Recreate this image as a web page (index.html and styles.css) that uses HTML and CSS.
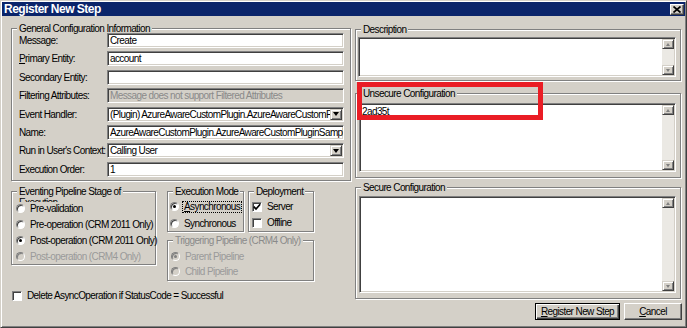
FILE: index.html
```html
<!DOCTYPE html>
<html lang="en">
<head>
    <meta charset="UTF-8">
    <title>Register New Step</title>
    <link rel="stylesheet" href="styles.css">
</head>
<body>
    <div class="window">
        <div class="titlebar">
            <span class="title">Register New Step</span>
            <span class="close-btn">
                <svg width="8" height="7" viewBox="0 0 8 7"><path d="M0.5 0.5 L7.5 6.5 M7.5 0.5 L0.5 6.5" stroke="#000" stroke-width="1.7"/></svg>
            </span>
        </div>

        <div class="content">
            <div class="col-left">
                <div class="group general">
                    <span class="gtitle">General Configuration Information</span>
                    <div class="form-grid">
                        <label>Message:</label>
                        <div class="field">Create</div>

                        <label><u>P</u>rimary Entity:</label>
                        <div class="field">account</div>

                        <label>Secondary Entity:</label>
                        <div class="field"></div>

                        <label>Filtering Attributes:</label>
                        <div class="field disabled">Message does not support Filtered Attributes</div>

                        <label>Event Handler:</label>
                        <div class="field combo">
                            <span class="combo-text">(Plugin) AzureAwareCustomPlugin.AzureAwareCustomPlugin</span>
                            <span class="dd-btn"><span class="arrow-down"></span></span>
                        </div>

                        <label>Name:</label>
                        <div class="field">AzureAwareCustomPlugin.AzureAwareCustomPluginSample01: Create of account</div>

                        <label>Run in User's Context:</label>
                        <div class="field combo">
                            <span class="combo-text">Calling User</span>
                            <span class="dd-btn"><span class="arrow-down"></span></span>
                        </div>

                        <label>Execution Order:</label>
                        <div class="field">1</div>
                    </div>
                </div>

                <div class="lower">
                    <div class="group stage">
                        <span class="gtitle">Eventing Pipeline Stage of<br>Execution</span>
                        <div class="items">
                            <div class="opt"><span class="radio"></span>Pre-validation</div>
                            <div class="opt"><span class="radio"></span>Pre-operation (CRM 2011 Only)</div>
                            <div class="opt"><span class="radio on"></span>Post-operation (CRM 2011 Only)</div>
                            <div class="opt off"><span class="radio"></span>Post-operation (CRM4 Only)</div>
                        </div>
                    </div>

                    <div class="lower-right">
                        <div class="lower-top">
                            <div class="group mode">
                                <span class="gtitle">Execution Mode</span>
                                <div class="items">
                                    <div class="opt"><span class="radio on"></span><span class="focus"><u>A</u>synchronous</span></div>
                                    <div class="opt"><span class="radio"></span>Synchronous</div>
                                </div>
                            </div>
                            <div class="group deploy">
                                <span class="gtitle">Deployment</span>
                                <div class="items">
                                    <div class="opt">
                                        <span class="check"><svg width="8" height="8" viewBox="0 0 8 8"><path d="M0.8 3.6 L3 6 L7.2 1.2" fill="none" stroke="#000" stroke-width="1.7"/></svg></span>Server
                                    </div>
                                    <div class="opt"><span class="check"></span>Offline</div>
                                </div>
                            </div>
                        </div>
                        <div class="group trigger">
                            <span class="gtitle">Triggering Pipeline (CRM4 Only)</span>
                            <div class="items">
                                <div class="opt off"><span class="radio on"></span>Parent Pipeline</div>
                                <div class="opt off"><span class="radio"></span>Child Pipeline</div>
                            </div>
                        </div>
                    </div>
                </div>

                <div class="opt delete-opt"><span class="check"></span>Delete AsyncOperation if StatusCode = Successful</div>
            </div>

            <div class="col-right">
                <div class="group desc">
                    <span class="gtitle">Description</span>
                    <div class="textbox">
                        <div class="text"></div>
                        <div class="vscroll"><span class="sb-btn"><span class="arrow-up"></span></span><span class="sb-btn"><span class="arrow-dn"></span></span></div>
                    </div>
                </div>

                <div class="group unsecure">
                    <span class="gtitle">Unsecure Configuration</span>
                    <div class="textbox">
                        <div class="text">2ad35t</div>
                        <div class="vscroll"><span class="sb-btn"><span class="arrow-up"></span></span><span class="sb-btn"><span class="arrow-dn"></span></span></div>
                    </div>
                </div>

                <div class="group secure">
                    <span class="gtitle">Secure Configuration</span>
                    <div class="textbox">
                        <div class="text"></div>
                        <div class="vscroll"><span class="sb-btn"><span class="arrow-up"></span></span><span class="sb-btn"><span class="arrow-dn"></span></span></div>
                    </div>
                </div>

                <div class="buttons">
                    <button class="btn default"><u>R</u>egister New Step</button>
                    <button class="btn cancel"><u>C</u>ancel</button>
                </div>
            </div>
        </div>

        <div class="highlight"></div>
    </div>
</body>
</html>
```

FILE: styles.css
```css
body {
    margin: 0;
    background: #ffffff;
    font-family: "Liberation Sans", Arial, sans-serif;
    font-size: 10px;
    letter-spacing: -0.6px;
    color: #000;
}

.window {
    position: relative;
    width: 687px;
    height: 328px;
    box-sizing: border-box;
    background: #d4d0c8;
    border: 1px solid;
    border-color: #d4d0c8 #404040 #404040 #d4d0c8;
    box-shadow: inset 1px 1px 0 #fff, inset -1px -1px 0 #808080;
    padding: 1px;
}

/* title bar */
.titlebar {
    height: 14px;
    background: #0a246a;
    color: #fff;
    display: flex;
    align-items: center;
    justify-content: space-between;
    padding: 0 1px 0 2px;
}

.title {
    font-weight: bold;
    font-size: 12px;
    letter-spacing: -0.5px;
    line-height: 14px;
}

.close-btn {
    width: 14px;
    height: 11px;
    box-sizing: border-box;
    background: #d4d0c8;
    border: 1px solid;
    border-color: #fff #404040 #404040 #fff;
    box-shadow: inset -1px -1px 0 #808080;
    display: flex;
    align-items: center;
    justify-content: center;
}

/* layout */
.content {
    display: flex;
    gap: 4px;
    padding: 12px 3px 0 9px;
}

.col-left {
    width: 340px;
    display: flex;
    flex-direction: column;
}

.col-right {
    width: 327px;
    display: flex;
    flex-direction: column;
}

/* group boxes */
.group {
    display: flex;
    flex-direction: column;
    box-sizing: border-box;
    border: 1px solid #808080;
    box-shadow: 1px 1px 0 #fff, inset 1px 1px 0 #fff;
}

.gtitle {
    align-self: flex-start;
    margin: -6px 0 0 5px;
    padding: 0 2px;
    line-height: 12px;
    background: #d4d0c8;
    white-space: nowrap;
}

.form-grid {
    display: grid;
    grid-template-columns: 88px 237px;
    grid-auto-rows: 15px;
    row-gap: 3.4px;
    align-items: center;
    margin: -2px 6px 3px 7px;
}

.form-grid label {
    white-space: nowrap;
    line-height: 15px;
}

.field {
    height: 15px;
    box-sizing: border-box;
    background: #fff;
    border: 1px solid;
    border-color: #808080 #fff #fff #808080;
    box-shadow: inset 1px 1px 0 #404040, inset -1px -1px 0 #d4d0c8;
    padding: 0 2px;
    line-height: 13px;
    white-space: nowrap;
    overflow: hidden;
}

.field.disabled {
    background: #d4d0c8;
    color: #8a8a8a;
}

.combo {
    display: flex;
    padding-right: 1px;
}

.combo-text {
    flex: 1;
    overflow: hidden;
}

.dd-btn {
    flex: none;
    width: 12px;
    height: 11px;
    margin-top: 1px;
    box-sizing: border-box;
    background: #d4d0c8;
    border: 1px solid;
    border-color: #d4d0c8 #404040 #404040 #d4d0c8;
    box-shadow: inset 1px 1px 0 #fff, inset -1px -1px 0 #808080;
    display: flex;
    align-items: center;
    justify-content: center;
}

.arrow-down {
    width: 0;
    height: 0;
    border-left: 3.5px solid transparent;
    border-right: 3.5px solid transparent;
    border-top: 4px solid #000;
}

/* lower option groups */
.lower {
    display: flex;
    gap: 11px;
    margin-top: 10px;
}

.lower-right {
    display: flex;
    flex-direction: column;
    gap: 8px;
}

.lower-top {
    display: flex;
    gap: 4px;
}

.items {
    display: flex;
    flex-direction: column;
}

.stage {
    width: 145px;
    height: 74px;
}

.stage .gtitle {
    line-height: 11px;
}

.stage .items {
    margin: -6px 0 0 4px;
    gap: 2px;
}

.mode {
    width: 77px;
    height: 41px;
}

.mode .items {
    margin: 2px 0 0 2px;
    gap: 3px;
}

.deploy {
    width: 66px;
    height: 41px;
}

.deploy .items {
    margin: 2px 0 0 3px;
    gap: 2px;
}

.trigger {
    width: 147px;
    height: 41px;
}

.trigger .gtitle {
    color: #8a8a8a;
}

.trigger .items {
    margin: 3px 0 0 3px;
    gap: 1px;
}

.opt {
    height: 14px;
    line-height: 14px;
    display: flex;
    align-items: center;
    gap: 5px;
    background: #d4d0c8;
    white-space: nowrap;
}

.opt.off {
    color: #9a9a9a;
}

.radio {
    flex: none;
    width: 9px;
    height: 9px;
    box-sizing: border-box;
    border-radius: 50%;
    background: #fff;
    border: 1px solid;
    border-color: #808080 #fff #fff #808080;
    box-shadow: inset 1px 1px 0 #404040;
    display: flex;
    align-items: center;
    justify-content: center;
}

.radio.on::after {
    content: "";
    width: 3px;
    height: 3px;
    border-radius: 50%;
    background: #000;
}

.opt.off .radio {
    background: #d4d0c8;
    box-shadow: inset 1px 1px 0 #808080;
}

.opt.off .radio.on::after {
    background: #808080;
}

.focus {
    border: 1px dotted #000;
    padding: 0 1px;
    margin-left: -2px;
    line-height: 10px;
}

.check {
    flex: none;
    width: 10px;
    height: 10px;
    box-sizing: border-box;
    background: #fff;
    border: 1px solid;
    border-color: #808080 #fff #fff #808080;
    box-shadow: inset 1px 1px 0 #404040;
    display: flex;
    align-items: center;
    justify-content: center;
}

.delete-opt {
    margin: 8px 0 0 1px;
}

/* right column text areas */
.desc {
    margin: 1px 1px 0 0;
}

.desc .textbox {
    margin: 1px 4px 3px 2px;
    height: 40px;
}

.unsecure {
    margin: 12px 1px 0 0;
}

.unsecure .textbox {
    margin: 3px 4px 5px 3px;
    height: 69px;
}

.secure {
    margin: 9px 1px 0 0;
}

.secure .textbox {
    margin: 2px 4px 5px 3px;
    height: 97px;
}

.textbox {
    display: flex;
    box-sizing: border-box;
    background: #fff;
    border: 1px solid;
    border-color: #808080 #fff #fff #808080;
    box-shadow: inset 1px 1px 0 #404040, inset -1px -1px 0 #d4d0c8;
    padding: 1px;
}

.textbox .text {
    flex: 1;
    padding: 1px 1px;
    line-height: 12px;
}

.vscroll {
    width: 12px;
    display: flex;
    flex-direction: column;
    justify-content: space-between;
    background: #ebe9e4;
}

.sb-btn {
    height: 10px;
    box-sizing: border-box;
    background: #d4d0c8;
    border: 1px solid;
    border-color: #d4d0c8 #404040 #404040 #d4d0c8;
    box-shadow: inset 1px 1px 0 #fff, inset -1px -1px 0 #808080;
    display: flex;
    align-items: center;
    justify-content: center;
}

.arrow-up,
.arrow-dn {
    width: 0;
    height: 0;
    border-left: 2.5px solid transparent;
    border-right: 2.5px solid transparent;
}

.arrow-up {
    border-bottom: 3px solid #808080;
}

.arrow-dn {
    border-top: 3px solid #808080;
}

/* dialog buttons */
.buttons {
    display: flex;
    justify-content: flex-end;
    gap: 4px;
    margin-top: 4px;
}

.btn {
    height: 17px;
    box-sizing: border-box;
    background: #d4d0c8;
    font-family: inherit;
    font-size: 10px;
    letter-spacing: -0.6px;
    line-height: 14px;
    white-space: nowrap;
    color: #000;
    padding: 0;
    border: 1px solid;
    border-color: #fff #404040 #404040 #fff;
    box-shadow: inset -1px -1px 0 #808080;
}

.btn.default {
    width: 85px;
    border-color: #000;
    box-shadow: inset 1px 1px 0 #fff, inset -1px -1px 0 #404040, inset -2px -2px 0 #808080;
}

.btn.cancel {
    width: 58px;
}

/* red annotation frame drawn over the screenshot */
.highlight {
    position: absolute;
    left: 356px;
    top: 81px;
    width: 186px;
    height: 38px;
    box-sizing: border-box;
    border: 5px solid #ea1d25;
}
```
